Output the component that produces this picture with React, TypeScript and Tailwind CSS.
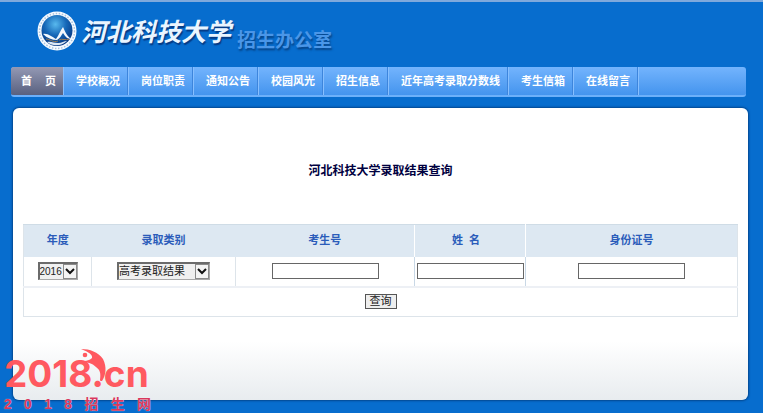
import type { ReactNode } from 'react';

const NAV_ITEMS = [
  '学校概况',
  '岗位职责',
  '通知公告',
  '校园风光',
  '招生信息',
  '近年高考录取分数线',
  '考生信箱',
  '在线留言',
];

const WATERMARK = ['2', '0', '1', '8', '招', '生', '网'];

interface SelectBoxProps {
  label: string;
  options: string[];
  className: string;
}

function SelectBox({ label, options, className }: SelectBoxProps) {
  return (
    <span className={`relative inline-block h-[18px] align-middle ${className}`}>
      <select
        aria-label={label}
        className="block h-full w-full appearance-none border border-t-2 border-l-2 border-[#a9a9a9] border-t-[#6b6b6b] border-l-[#6b6b6b] bg-[#f0f0f0] leading-[15px] text-[#222]"
      >
        {options.map((option) => (
          <option key={option}>{option}</option>
        ))}
      </select>
      <svg viewBox="0 0 14 15" className="pointer-events-none absolute top-[2px] right-px h-[15px] w-[14px]">
        <rect x="0.5" y="0.5" width="13" height="14" fill="#f4f4f4" stroke="#8a8a8a" />
        <path d="M3 5 7 9l4-4" fill="none" stroke="#111" strokeWidth="2" />
      </svg>
    </span>
  );
}

function TextBox({ label }: { label: string }) {
  return (
    <input
      type="text"
      aria-label={label}
      className="mx-auto block h-4 w-[107px] border border-[#666] bg-white px-px text-[11px]"
    />
  );
}

function HeadCell({ children, className = '' }: { children: ReactNode; className?: string }) {
  return (
    <th scope="col" className={`border-t border-[#cfdce6] pb-[2px] font-bold whitespace-pre ${className}`}>
      {children}
    </th>
  );
}

// 校徽
function Emblem() {
  return (
    <svg viewBox="0 0 40 40" className="h-10 w-10" aria-hidden="true">
      <defs>
        <radialGradient id="globe" cx="0.45" cy="0.3" r="0.7">
          <stop offset="0" stopColor="#58b9ee" />
          <stop offset="0.5" stopColor="#1668b8" />
          <stop offset="1" stopColor="#06357f" />
        </radialGradient>
      </defs>
      <circle cx="20" cy="20" r="19.5" fill="#f6faff" />
      <circle cx="20" cy="20" r="17.5" fill="none" stroke="#a9c3df" strokeWidth="1.5" strokeDasharray="1.5 1.6" />
      <circle cx="20" cy="19.5" r="15.5" fill="url(#globe)" />
      <path
        d="M6 23c5-1 9 3 13 5 3-4 4-8 7-12 2 4 3 8 8 12-4 0-6-3-8-6-2 3-3 5-6 7-5 0-10-2-14-6z"
        fill="#f3f8fd"
      />
      <path d="M10 31c4-1 7 1 11 1s6-2 9-2c-5 5-14 6-20 1z" fill="#dde7f3" />
      <path d="M9 28c4 0 7 4 12 2M22 29c3-2 7 1 10-1" fill="none" stroke="#9a7d55" strokeWidth="1" />
    </svg>
  );
}

function Watermark() {
  return (
    <div className="pointer-events-none absolute bottom-0 left-1 w-[147px] text-[#ff5960]">
      <svg viewBox="0 0 32 36" className="absolute top-0 left-[73px] h-9 w-8" aria-hidden="true">
        <circle cx="8" cy="7" r="2.3" fill="currentColor" />
        <path
          d="M4 1c9 0 17 3 22 10 4 8 3 16-1 22-1 0-2 0-2-1 1-7 0-10-4-13-4-4-8-5-18-5 7-1 11-1 14-4 1-3-3-6-11-9z"
          fill="currentColor"
        />
      </svg>
      <div className="pt-[3px] font-['Inter'] text-[37px] leading-[45px] font-bold">2018.cn</div>
      <div className="flex justify-between pb-px font-['Liberation_Sans','Noto_Sans_CJK_SC',sans-serif] text-[14px] leading-4 font-bold text-[#d8375c] [text-shadow:0_0_1px_#fff]">
        {WATERMARK.map((char) => (
          <span key={char}>{char}</span>
        ))}
      </div>
    </div>
  );
}

export default function App() {
  return (
    <div className="relative flex min-h-screen flex-col border-t-2 border-[#7fa9dc] bg-[#076dce] pr-[17px] pb-[13px] pl-[11px] font-['Liberation_Sans','Noto_Sans_CJK_SC',sans-serif] text-[11px]">
      <header className="flex h-[65px] items-start pt-[9px] pl-[26px]">
        <Emblem />
        <h1 className="ml-1 text-[25px] leading-[42px] font-bold text-[#eaf5ff] italic [text-shadow:1px_2px_1px_#053b86]">
          河北科技大学
        </h1>
        <span className="mt-[18px] ml-[6px] text-[19px] leading-6 font-bold text-[#4a96e8] [text-shadow:1px_2px_2px_#064488]">
          招生办公室
        </span>
      </header>

      <nav className="flex h-[30px] overflow-hidden rounded-[3px] border-b-2 border-[#6cb0fa] bg-linear-to-b from-[#73b4fd] to-[#4394ee] leading-7 font-bold text-white">
        <a
          href="#home"
          className="-mb-[2px] flex w-[52px] justify-between bg-linear-to-b from-[#9499b4] to-[#555d7c] pr-[7px] pl-[10px]"
        >
          <span>首</span>
          <span>页</span>
        </a>
        {NAV_ITEMS.map((item) => (
          <a
            key={item}
            href={`#${item}`}
            className="border-r border-l border-r-[#3d85dc] border-l-[#86bfff] pr-[7px] pl-3 whitespace-nowrap"
          >
            {item}
          </a>
        ))}
        <span className="border-l border-[#86bfff]" />
      </nav>

      <main className="mt-[11px] -mr-[2px] ml-[2px] flex-1 rounded-md bg-linear-to-b from-white from-80% to-[#e8ecef] px-[10px] shadow-[0_0_2px_1px_#04478f]">
        <h2 className="pt-[53px] text-center text-[12px] leading-5 font-bold text-[#000040]">
          河北科技大学录取结果查询
        </h2>

        <form className="mt-[43px]" onSubmit={(e) => e.preventDefault()}>
          <table className="w-full table-fixed border-collapse border border-[#dde4ea] bg-white text-center">
            <colgroup>
              <col className="w-[68px]" />
              <col className="w-[144px]" />
              <col className="w-[179px]" />
              <col className="w-[111px]" />
              <col />
            </colgroup>
            <thead>
              <tr className="h-8 bg-[#dde8f2] text-[#2b5cba]">
                <HeadCell>年度</HeadCell>
                <HeadCell>录取类别</HeadCell>
                <HeadCell>考生号</HeadCell>
                <HeadCell className="border-x border-x-white pr-2">姓{'  '}名</HeadCell>
                <HeadCell>身份证号</HeadCell>
              </tr>
            </thead>
            <tbody>
              <tr className="h-[30px] border-b-2 border-[#edf0f5]">
                <td className="border-r border-[#dde4ea]">
                  <SelectBox label="年度" options={['2016']} className="w-10 text-[10px]" />
                </td>
                <td className="border-r border-[#dde4ea]">
                  <SelectBox label="录取类别" options={['高考录取结果']} className="w-[93px]" />
                </td>
                <td className="border-r border-[#c9d8e6]">
                  <TextBox label="考生号" />
                </td>
                <td className="border-r border-[#c9d8e6]">
                  <TextBox label="姓名" />
                </td>
                <td>
                  <TextBox label="身份证号" />
                </td>
              </tr>
              <tr className="h-[30px]">
                <td colSpan={5}>
                  <button
                    type="submit"
                    className="mx-auto block h-[15px] w-8 border border-[#555] bg-[#eee] text-[11px] leading-[13px] text-[#222]"
                  >
                    查询
                  </button>
                </td>
              </tr>
            </tbody>
          </table>
        </form>
      </main>

      <Watermark />
    </div>
  );
}
